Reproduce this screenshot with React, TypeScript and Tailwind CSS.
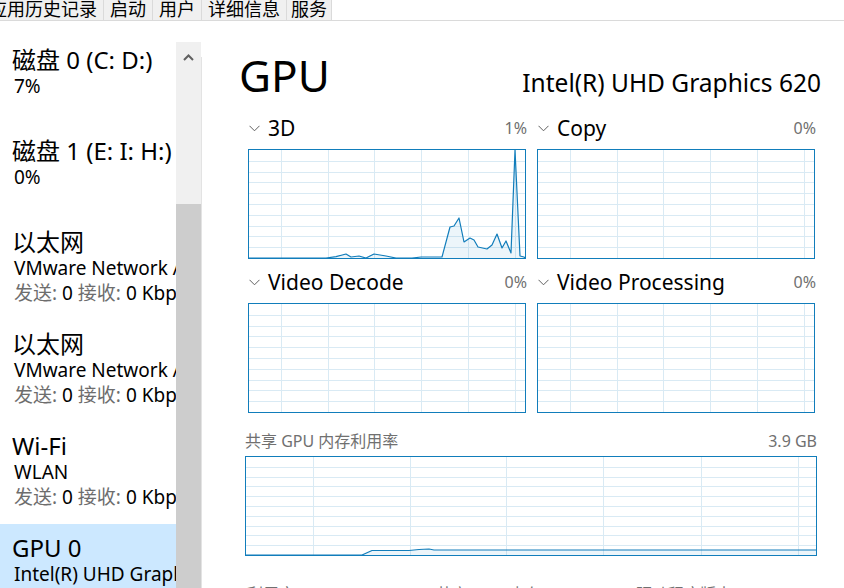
import React from "react";

type Pt = [number, number];

function Chart({
  w,
  h,
  vlines,
  points,
  boxClass,
}: {
  w: number;
  h: number;
  vlines: number[];
  points?: Pt[];
  boxClass: string;
}) {
  const hs = Array.from({ length: 9 }, (_, i) => Math.round(((i + 1) * h) / 10) + 0.5);
  const line = points ? points.map((p) => `${p[0]},${p[1]}`).join(" ") : "";
  const area = points ? `0,${h} ${line} ${w},${h}` : "";
  return (
    <div className={`border border-[#117dbb] bg-white ${boxClass}`}>
      <svg width={w} height={h} className="block">
        {hs.map((y) => (
          <line key={"h" + y} x1={0} x2={w} y1={y} y2={y} stroke="#d9eaf4" strokeWidth={1} />
        ))}
        {vlines.map((x) => (
          <line key={"v" + x} x1={x + 0.5} x2={x + 0.5} y1={0} y2={h} stroke="#d9eaf4" strokeWidth={1} />
        ))}
        {points && (
          <>
            <polygon points={area} fill="#117dbb" fillOpacity={0.08} />
            <polyline points={line} fill="none" stroke="#117dbb" strokeWidth={1.2} strokeLinejoin="round" />
          </>
        )}
      </svg>
    </div>
  );
}

function Chevron() {
  return (
    <svg width="11" height="7" viewBox="0 0 11 7" className="block">
      <polyline points="0.5,0.8 5.5,5.8 10.5,0.8" fill="none" stroke="#606060" strokeWidth={1} />
    </svg>
  );
}

function Label({ name, value }: { name: string; value: string }) {
  return (
    <div className="flex items-center justify-between h-[24px]">
      <div className="flex items-center gap-[8px] pl-[1px]">
        <Chevron />
        <span className="text-[21px] leading-[24px] text-black">{name}</span>
      </div>
      <span className="text-[16px] leading-[24px] text-[#707070] -mr-[1px]">{value}</span>
    </div>
  );
}

const smallV = [32, 79, 125, 172, 219, 266];

const data3d: Pt[] = [
  [0, 108], [77, 108], [87, 106.7], [97, 104], [102, 107], [110, 106], [117, 108], [125, 104],
  [137, 106], [147, 108], [163, 108], [172, 107], [180, 107], [193, 107], [201, 77], [205, 76],
  [210, 68], [215, 92], [221, 88], [225, 90], [229, 97], [238, 99], [243, 95], [248, 84],
  [253, 98], [257, 91], [262, 103], [266, 0], [271, 106], [275, 107], [276, 108],
];

const dataMem: Pt[] = [
  [0, 98], [116, 98], [126, 93.5], [163, 93.5], [173, 92.5], [183, 92], [188, 93], [570, 93],
];

type Item = {
  title: string;
  sub?: string;
  net?: boolean;
  h: string;
  selected?: boolean;
};

const items: Item[] = [
  { title: "磁盘 0 (C: D:)", sub: "7%", h: "h-[91px]" },
  { title: "磁盘 1 (E: I: H:)", sub: "0%", h: "h-[91px]" },
  { title: "以太网", sub: "VMware Network Adapter VMnet1", net: true, h: "h-[102px]" },
  { title: "以太网", sub: "VMware Network Adapter VMnet8", net: true, h: "h-[102px]" },
  { title: "Wi-Fi", sub: "WLAN", net: true, h: "h-[102px]" },
  { title: "GPU 0", sub: "Intel(R) UHD Graphics 620", h: "h-[102px]", selected: true },
];

export default function App() {
  const tabs = ["应用历史记录", "启动", "用户", "详细信息", "服务"];
  return (
    <div className="w-[844px] h-[588px] overflow-hidden bg-white flex flex-col font-['Noto_Sans','Noto_Sans_CJK_SC',sans-serif] text-black">
      {/* tab bar */}
      <div className="h-[21px] shrink-0 border-b border-[#dadada] flex overflow-hidden">
        <div className="flex -ml-[17px]">
          {tabs.map((t) => (
            <div
              key={t}
              className="h-[20px] px-[6px] last:px-[4px] bg-[#f0f0f0] border-r border-[#dadada] text-[18px] leading-[18px] whitespace-nowrap"
            >
              {t}
            </div>
          ))}
        </div>
      </div>

      <div className="flex flex-1 min-h-0">
        {/* sidebar list */}
        <div className="w-[176px] shrink-0 overflow-hidden pt-[15px]">
          {items.map((it, i) => (
            <div
              key={i}
              className={`${it.h} shrink-0 whitespace-nowrap overflow-hidden ${it.selected ? "bg-[#cce8ff]" : ""}`}
            >
              <div className="pt-[10px] pl-[12px] text-[24px] leading-[28px]">{it.title}</div>
              <div className="pl-[14px] text-[19px] leading-[24px]">{it.sub}</div>
              {it.net && (
                <div className="pl-[14px] text-[19px] leading-[26px]">
                  <span className="text-[#6d6d6d]">发送:</span> 0{" "}
                  <span className="text-[#6d6d6d]">接收:</span> 0 Kbps
                </div>
              )}
            </div>
          ))}
        </div>

        {/* scrollbar */}
        <div className="w-[25px] shrink-0 mt-[21px] bg-[#f0f0f0] flex flex-col">
          <div className="h-[30px] flex items-center justify-center">
            <svg width="11" height="7" viewBox="0 0 11 7" className="block">
              <polyline points="1,6 5.5,1.5 10,6" fill="none" stroke="#606060" strokeWidth={2} />
            </svg>
          </div>
          <div className="h-[132px]" />
          <div className="flex-1 bg-[#cdcdcd]" />
        </div>

        {/* splitter */}
        <div className="w-px shrink-0 mt-[36px] bg-[#e3e3e3]" />

        {/* main panel */}
        <div className="flex-1 min-w-0 pl-[37px] flex flex-col">
          <div className="mt-[32px] w-[582px] flex items-baseline justify-between">
            <span className="text-[44px] leading-[44px]">GPU</span>
            <span className="text-[24.5px] leading-[44px]">Intel(R) UHD Graphics 620</span>
          </div>

          <div className="ml-[9px] w-[567px] grid grid-cols-2 gap-x-[11px] mt-[11px]">
            <div>
              <Label name="3D" value="1%" />
              <Chart boxClass="mt-[9px] w-[278px] h-[110px]" w={276} h={108} vlines={smallV} points={data3d} />
            </div>
            <div>
              <Label name="Copy" value="0%" />
              <Chart boxClass="mt-[9px] w-[278px] h-[110px]" w={276} h={108} vlines={smallV} />
            </div>
            <div className="mt-[11px]">
              <Label name="Video Decode" value="0%" />
              <Chart boxClass="mt-[9px] w-[278px] h-[110px]" w={276} h={108} vlines={smallV} />
            </div>
            <div className="mt-[11px]">
              <Label name="Video Processing" value="0%" />
              <Chart boxClass="mt-[9px] w-[278px] h-[110px]" w={276} h={108} vlines={smallV} />
            </div>
          </div>

          <div className="ml-[6px] w-[572px] mt-[18px]">
            <div className="flex items-center justify-between h-[20px] text-[16px] leading-[20px] text-[#707070]">
              <span>共享 GPU 内存利用率</span>
              <span>3.9 GB</span>
            </div>
            <Chart
              boxClass="mt-[5px] w-[572px] h-[100px]"
              w={570}
              h={98}
              vlines={[67, 164, 260, 357, 455, 552]}
              points={dataMem}
            />
          </div>

          <div className="ml-[8px] mt-[28px] flex text-[16px] leading-[20px] text-[#707070] whitespace-nowrap">
            <span className="w-[189px]">利用率</span>
            <span className="w-[200px]">共享 GPU 内存</span>
            <span>驱动程序版本:</span>
          </div>
        </div>
      </div>
    </div>
  );
}
